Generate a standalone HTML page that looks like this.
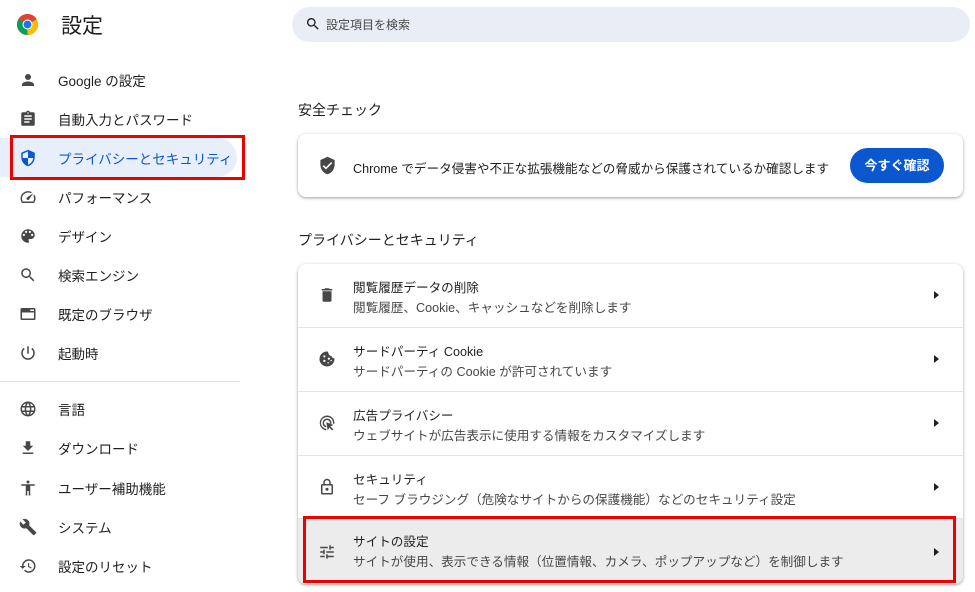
<!DOCTYPE html>
<html><head><meta charset="utf-8">
<style>
*{margin:0;padding:0;box-sizing:border-box}
body{width:975px;height:592px;overflow:hidden;background:#fff;font-family:"Liberation Sans","Noto Sans CJK JP",sans-serif;color:#1f1f1f;position:relative}
.abs{position:absolute;white-space:nowrap}
.nav{position:absolute;left:0;height:39px;width:237px;display:flex;align-items:center;font-size:13.5px;color:#1f1f1f;white-space:nowrap}
.nav svg{position:absolute;left:19px;width:18px;height:18px;fill:#474747}
.nav span{position:absolute;left:58px}
.active{background:#e8effc;border-radius:0 20px 20px 0;color:#0b57d0}
.active svg{fill:#0b57d0}
.card{position:absolute;left:298px;width:665px;background:#fff;border-radius:8px;box-shadow:0 1px 3px rgba(0,0,0,.3),0 1px 2px rgba(0,0,0,.1)}
.row{position:absolute;left:0;width:665px;border-top:1px solid #e3e3e3;white-space:nowrap}
.row svg{position:absolute;left:20px;width:18px;height:18px;fill:#474747}
.row .t{position:absolute;left:55px;font-size:12.6px;color:#1f1f1f}
.row .s{position:absolute;left:55px;font-size:12.6px;color:#474747}
.row .arr{position:absolute;left:636px;width:0;height:0;border-top:4px solid transparent;border-bottom:4px solid transparent;border-left:5px solid #1f1f1f}
</style></head><body>
<svg class="abs" style="left:16px;top:13px" width="23" height="23" viewBox="0 0 24 24">
<circle cx="12" cy="12" r="11" fill="#db4437"/>
<path d="M12 12 L21.5 6.5 A11 11 0 0 1 12 23 Z" fill="#fbbc04"/>
<path d="M12 12 L12 23 A11 11 0 0 1 2.5 6.5 Z" fill="#0f9d58"/>
<path d="M12 12 L2.5 6.5 A11 11 0 0 1 21.5 6.5 Z" fill="#db4437"/>
<circle cx="12" cy="12" r="5.2" fill="#fff"/><circle cx="12" cy="12" r="4.1" fill="#1a73e8"/>
</svg>
<div class="abs" style="left:61px;top:10px;font-size:21px;color:#1f1f1f">設定</div>

<div class="abs" style="left:292px;top:7px;width:678px;height:35px;background:#e9eef6;border-radius:18px"></div>
<svg class="abs" style="left:305px;top:16px" width="16" height="16" viewBox="0 0 24 24"><path fill="#1f1f1f" d="M15.5 14h-.8l-.3-.3A6.5 6.5 0 1 0 9.5 16a6.5 6.5 0 0 0 4.2-1.6l.3.3v.8l5 5 1.5-1.5-5-5zm-6 0A4.5 4.5 0 1 1 14 9.5 4.5 4.5 0 0 1 9.5 14z"/></svg>
<div class="abs" style="left:326px;top:16px;font-size:12px;color:#474747">設定項目を検索</div>

<div class="nav" style="top:60px"><svg viewBox="0 0 24 24"><path d="M12 12a4 4 0 1 0 0-8 4 4 0 0 0 0 8zm0 2c-2.7 0-8 1.3-8 4v2h16v-2c0-2.7-5.3-4-8-4z"/></svg><span>Google の設定</span></div>
<div class="nav" style="top:99px"><svg viewBox="0 0 24 24"><path d="M19 3h-4.2A3 3 0 0 0 12 1a3 3 0 0 0-2.8 2H5a2 2 0 0 0-2 2v14a2 2 0 0 0 2 2h14a2 2 0 0 0 2-2V5a2 2 0 0 0-2-2zm-7 0a1 1 0 1 1 0 2 1 1 0 0 1 0-2zm2 14H7v-2h7v2zm3-4H7v-2h10v2zm0-4H7V7h10v2z"/></svg><span>自動入力とパスワード</span></div>
<div class="nav active" style="top:138px"><svg viewBox="0 0 24 24"><path d="M12 1L3 5v6c0 5.5 3.8 10.7 9 12 5.2-1.3 9-6.5 9-12V5l-9-4zm0 11h7c-.5 4.1-3.3 7.8-7 8.9V12H5V6.3l7-3.1V12z"/></svg><span>プライバシーとセキュリティ</span></div>
<div class="nav" style="top:177px"><svg viewBox="0 0 24 24"><path d="M20.4 8.6l-1.2 1.8a8 8 0 0 1-.2 7.6H5a8 8 0 0 1 10.6-11.1l1.8-1.2A10 10 0 0 0 3.3 19a2 2 0 0 0 1.7 1h14a2 2 0 0 0 1.7-1 10 10 0 0 0-.3-10.4zm-9.8 6.8a2 2 0 0 0 2.8 0l5.7-8.5-8.5 5.7a2 2 0 0 0 0 2.8z"/></svg><span>パフォーマンス</span></div>
<div class="nav" style="top:216px"><svg viewBox="0 0 24 24"><path d="M12 3a9 9 0 0 0 0 18 1.5 1.5 0 0 0 1.1-2.5 1.5 1.5 0 0 1 1.1-2.5H16a5 5 0 0 0 5-5c0-4.4-4-8-9-8zm-5.5 9a1.5 1.5 0 1 1 0-3 1.5 1.5 0 0 1 0 3zm3-4a1.5 1.5 0 1 1 0-3 1.5 1.5 0 0 1 0 3zm5 0a1.5 1.5 0 1 1 0-3 1.5 1.5 0 0 1 0 3zm3 4a1.5 1.5 0 1 1 0-3 1.5 1.5 0 0 1 0 3z"/></svg><span>デザイン</span></div>
<div class="nav" style="top:255px"><svg viewBox="0 0 24 24"><path d="M15.5 14h-.8l-.3-.3A6.5 6.5 0 1 0 9.5 16a6.5 6.5 0 0 0 4.2-1.6l.3.3v.8l5 5 1.5-1.5-5-5zm-6 0A4.5 4.5 0 1 1 14 9.5 4.5 4.5 0 0 1 9.5 14z"/></svg><span>検索エンジン</span></div>
<div class="nav" style="top:294px"><svg viewBox="0 0 24 24"><path d="M20 4H4a2 2 0 0 0-2 2v12a2 2 0 0 0 2 2h16a2 2 0 0 0 2-2V6a2 2 0 0 0-2-2zm0 14H4v-8h16v8zm0-10h-5V6h5v2z"/></svg><span>既定のブラウザ</span></div>
<div class="nav" style="top:333px"><svg viewBox="0 0 24 24"><path d="M13 3h-2v10h2V3zm4.8 2.2l-1.4 1.4A7 7 0 1 1 7.6 6.6L6.2 5.2A9 9 0 1 0 17.8 5.2z"/></svg><span>起動時</span></div>
<div class="abs" style="left:0;top:381px;width:240px;height:1px;background:#e3e3e3"></div>
<div class="nav" style="top:389px"><svg viewBox="0 0 24 24"><path d="M12 2a10 10 0 1 0 0 20 10 10 0 0 0 0-20zm6.9 6h-3a15.7 15.7 0 0 0-1.4-3.6A8 8 0 0 1 18.9 8zM12 4c.8 1.2 1.5 2.5 1.9 4h-3.8c.4-1.4 1.1-2.8 1.9-4zM4.3 14a8 8 0 0 1 0-4h3.4a16.5 16.5 0 0 0 0 4H4.3zm.8 2h3a15.7 15.7 0 0 0 1.4 3.6A8 8 0 0 1 5.1 16zm3-8h-3a8 8 0 0 1 4.3-3.6C8.9 5.5 8.4 6.7 8.1 8zM12 20c-.8-1.2-1.5-2.5-1.9-4h3.8c-.4 1.4-1.1 2.8-1.9 4zm2.3-6H9.7a14.7 14.7 0 0 1 0-4h4.7a14.7 14.7 0 0 1 0 4zm.3 5.6c.6-1.1 1.1-2.3 1.4-3.6h3a8 8 0 0 1-4.4 3.6zM16.4 14a16.5 16.5 0 0 0 0-4h3.4a8 8 0 0 1 0 4h-3.4z"/></svg><span>言語</span></div>
<div class="nav" style="top:428px"><svg viewBox="0 0 24 24"><path d="M19 9h-4V3H9v6H5l7 7 7-7zM5 18v2h14v-2H5z"/></svg><span>ダウンロード</span></div>
<div class="nav" style="top:468px"><svg viewBox="0 0 24 24"><path d="M12 2a2 2 0 1 1 0 4 2 2 0 0 1 0-4zm9 7h-6v13h-2v-6h-2v6H9V9H3V7h18v2z"/></svg><span>ユーザー補助機能</span></div>
<div class="nav" style="top:507px"><svg viewBox="0 0 24 24"><path d="M22.7 19l-9.1-9.1c.9-2.3.4-5-1.5-6.9-2-2-5-2.4-7.4-1.3L9 6 6 9 1.6 4.7C.4 7.1.9 10.1 2.9 12.1c1.9 1.9 4.6 2.4 6.9 1.5l9.1 9.1c.4.4 1 .4 1.4 0l2.3-2.3c.5-.4.5-1.1.1-1.4z"/></svg><span>システム</span></div>
<div class="nav" style="top:546px"><svg viewBox="0 0 24 24"><path d="M13 3a9 9 0 0 0-9 9H1l3.9 3.9L9 12H6a7 7 0 1 1 2.1 5l-1.4 1.4A9 9 0 1 0 13 3zm-1 5v5l4.3 2.5.7-1.2-3.5-2.1V8H12z"/></svg><span>設定のリセット</span></div>
<div class="abs" style="left:10px;top:135px;width:235px;height:45px;border:3px solid #ee0000"></div>

<div class="abs" style="left:298px;top:100px;font-size:14px">安全チェック</div>
<div class="card" style="top:134px;height:63px">
<svg class="abs" style="left:20px;top:22px" width="19" height="19" viewBox="0 0 24 24"><path fill="#474747" d="M12 1L3 5v6c0 5.5 3.8 10.7 9 12 5.2-1.3 9-6.5 9-12V5l-9-4zm-2 16l-4-4 1.4-1.4L10 14.2l6.6-6.6L18 9l-8 8z"/></svg>
<div class="abs" style="left:55px;top:24px;font-size:12.6px">Chrome でデータ侵害や不正な拡張機能などの脅威から保護されているか確認します</div>
<div class="abs" style="left:552px;top:14px;width:94px;height:35px;background:#0b57d0;border-radius:18px;color:#fff;font-size:13px;font-weight:bold;text-align:center;line-height:35px">今すぐ確認</div>
</div>

<div class="abs" style="left:298px;top:230px;font-size:14px">プライバシーとセキュリティ</div>
<div class="card" style="top:264px;height:320px;overflow:hidden">
<div class="row" style="top:0;height:63px;border-top:none">
<svg style="top:22px" viewBox="0 0 24 24"><path d="M6 19a2 2 0 0 0 2 2h8a2 2 0 0 0 2-2V7H6v12zM19 4h-3.5l-1-1h-5l-1 1H5v2h14V4z"/></svg>
<div class="t" style="top:13px">閲覧履歴データの削除</div><div class="s" style="top:33px">閲覧履歴、Cookie、キャッシュなどを削除します</div><div class="arr" style="top:27px"></div></div>
<div class="row" style="top:63px;height:64px">
<svg style="top:22px" viewBox="0 0 24 24"><path d="M21.9 11.1A4 4 0 0 1 18 8a4 4 0 0 1-4-4A4 4 0 0 1 12.9 2 10 10 0 1 0 21.9 11.1zM8.5 16a1.5 1.5 0 1 1 0-3 1.5 1.5 0 0 1 0 3zm0-6a1.5 1.5 0 1 1 0-3 1.5 1.5 0 0 1 0 3zm5 8a1 1 0 1 1 0-2 1 1 0 0 1 0 2zm1-5a1.5 1.5 0 1 1 0-3 1.5 1.5 0 0 1 0 3zm3 2a1 1 0 1 1 0-2 1 1 0 0 1 0 2z"/></svg>
<div class="t" style="top:13px">サードパーティ Cookie</div><div class="s" style="top:33px">サードパーティの Cookie が許可されています</div><div class="arr" style="top:27px"></div></div>
<div class="row" style="top:127px;height:64px">
<svg style="top:22px" viewBox="0 0 24 24"><path d="M12 2a10 10 0 0 0-1 19.9v-2A8 8 0 1 1 19.9 13h2A10 10 0 0 0 12 2zm0 4a6 6 0 0 0-1 11.9v-2A4 4 0 1 1 15.9 13h2A6 6 0 0 0 12 6zm-1 5l2 11 2-4 4 4 1.5-1.5-4-4 4-2-9.5-3.5z"/></svg>
<div class="t" style="top:13px">広告プライバシー</div><div class="s" style="top:33px">ウェブサイトが広告表示に使用する情報をカスタマイズします</div><div class="arr" style="top:27px"></div></div>
<div class="row" style="top:191px;height:63px">
<svg style="top:22px" viewBox="0 0 24 24"><path d="M18 8h-1V6A5 5 0 0 0 7 6v2H6a2 2 0 0 0-2 2v10a2 2 0 0 0 2 2h12a2 2 0 0 0 2-2V10a2 2 0 0 0-2-2zM9 6a3 3 0 0 1 6 0v2H9V6zm9 14H6V10h12v10zm-6-3a2 2 0 1 0 0-4 2 2 0 0 0 0 4z"/></svg>
<div class="t" style="top:13px">セキュリティ</div><div class="s" style="top:33px">セーフ ブラウジング（危険なサイトからの保護機能）などのセキュリティ設定</div><div class="arr" style="top:27px"></div></div>
<div class="row" style="top:254px;height:66px;background:#ececec">
<svg style="top:24px" viewBox="0 0 24 24"><path d="M3 17v2h6v-2H3zM3 5v2h10V5H3zm10 16v-2h8v-2h-8v-2h-2v6h2zM7 9v2H3v2h4v2h2V9H7zm14 4v-2H11v2h10zm-6-4h2V7h4V5h-4V3h-2v6z"/></svg>
<div class="t" style="top:12px">サイトの設定</div><div class="s" style="top:32px">サイトが使用、表示できる情報（位置情報、カメラ、ポップアップなど）を制御します</div><div class="arr" style="top:29px"></div></div>
</div>
<div class="abs" style="left:303px;top:516px;width:653px;height:67px;border:3px solid #ee0000"></div>
</body></html>
